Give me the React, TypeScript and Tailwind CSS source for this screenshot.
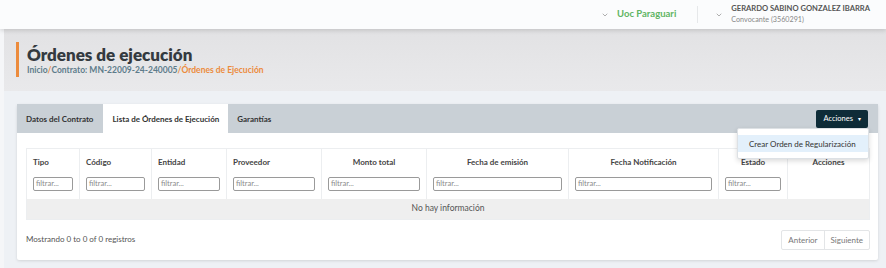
import { ChevronDown } from 'lucide-react'

const font = { fontFamily: 'Lato, "Noto Sans", sans-serif' }

interface Col {
  label: string
  width: string
  center?: boolean
  filter?: boolean
}

const cols: Col[] = [
  { label: 'Tipo', width: 'w-[53px]', filter: true },
  { label: 'Código', width: 'w-[72px]', filter: true },
  { label: 'Entidad', width: 'w-[75px]', filter: true },
  { label: 'Proveedor', width: 'w-[95px]', filter: true },
  { label: 'Monto total', width: 'w-[105px]', center: true, filter: true },
  { label: 'Fecha de emisión', width: 'w-[142px]', center: true, filter: true },
  { label: 'Fecha Notificación', width: 'w-[150px]', center: true, filter: true },
  { label: 'Estado', width: 'w-[69px]', center: true, filter: true },
  { label: 'Acciones', width: 'flex-1', center: true }
]

function TopBar() {
  return (
    <div className="h-[29px] bg-[#fbfcfd] shadow-[0_2px_4px_rgba(0,0,0,0.12)] relative z-10 flex items-center justify-end pr-[16px]">
      <div className="flex items-center gap-[8px]">
        <ChevronDown size={8} className="text-[#888]" />
        <span className="text-[9.5px] font-bold text-[#5fb563]">Uoc Paraguari</span>
      </div>
      <div className="w-px h-[17px] bg-[#e6e8ea] ml-[21px] mr-[17px]" />
      <div className="flex items-center gap-[8px]">
        <ChevronDown size={8} className="text-[#888]" />
        <div className="flex flex-col leading-[11px] pb-[1px]">
          <span className="text-[7.6px] font-bold text-[#555]">GERARDO SABINO GONZALEZ IBARRA</span>
          <span className="text-[7.2px] text-[#888]">Convocante (3560291)</span>
        </div>
      </div>
    </div>
  )
}

function Table() {
  return (
    <div className="border border-[#eceef0]">
      <div className="flex">
        {cols.map((c) => (
          <div
            key={c.label}
            className={`${c.width} h-[50px] border-r border-[#eceef0] last:border-r-0 px-[6px] pt-[7px] flex flex-col`}
          >
            <span className={`text-[8px] font-bold text-[#444] ${c.center ? 'text-center' : ''}`}>{c.label}</span>
            {c.filter && (
              <div className="mt-[9px] h-[14px] border border-[#9a9a9a] rounded-[2px] bg-white flex items-center px-[2px]">
                <span className="text-[7.5px] text-[#8a8a8a]">filtrar...</span>
              </div>
            )}
          </div>
        ))}
      </div>
      <div className="h-[20px] bg-[#efefef] flex items-center justify-center">
        <span className="text-[8.5px] text-[#555] pb-[1px]">No hay información</span>
      </div>
    </div>
  )
}

export default function App() {
  return (
    <div style={font} className="w-[886px] h-[268px] overflow-hidden bg-[#eef1f5] flex flex-col">
      <TopBar />
      <div className="flex flex-1">
        <div className="w-[4px] bg-[#f5f6f8]" />
        <div className="flex-1 flex flex-col">
          <div className="h-[62px] bg-gradient-to-b from-[#e2e2e4] to-[#e9e9eb] pl-[12px] pt-[13px]">
            <div className="border-l-[3px] border-[#ec8b3c] pl-[8px] h-[35px] flex flex-col justify-center">
              <h1 className="text-[17px] font-extrabold text-[#343a40] leading-[21px]">Órdenes de ejecución</h1>
              <div className="text-[8.5px] font-bold leading-[11px]">
                <span className="text-[#5e7c8b]">Inicio</span>
                <span className="text-[#ec8b3c]">/</span>
                <span className="text-[#5e7c8b]">Contrato: MN-22009-24-240005</span>
                <span className="text-[#ec8b3c]">/Órdenes de Ejecución</span>
              </div>
            </div>
          </div>
          <div className="pl-[13px] pr-[8px] pt-[13px]">
            <div className="bg-white rounded-[2px] shadow-[0_1px_3px_rgba(0,0,0,0.12)] h-[156px] relative">
              <div className="h-[29px] bg-[#c9d0d6] flex items-stretch pl-[9px] pr-[10px]">
                <div className="flex items-center pr-[10px] text-[8px] font-bold text-[#333]">Datos del Contrato</div>
                <div className="flex items-center bg-white px-[9px] text-[8px] font-bold text-[#333]">Lista de Órdenes de Ejecución</div>
                <div className="flex items-center px-[9px] text-[8px] font-bold text-[#333]">Garantías</div>
                <div className="flex-1" />
                <div className="flex items-center">
                  <button className="h-[18px] px-[7px] bg-[#0e2c38] rounded-[2px] text-white text-[7.5px] flex items-center gap-[5px]">
                    Acciones <span className="text-[6px]">▾</span>
                  </button>
                </div>
              </div>
              <div className="px-[9px] pt-[15px] pr-[8px]">
                <Table />
                <div className="flex items-center justify-between mt-[10px]">
                  <span className="text-[8px] text-[#555] pb-[2px]">Mostrando 0 to 0 of 0 registros</span>
                  <div className="flex border border-[#e3e5e7] rounded-[2px] h-[20px]">
                    <span className="px-[6px] flex items-center text-[8px] text-[#777] border-r border-[#e3e5e7]">Anterior</span>
                    <span className="px-[6px] flex items-center text-[8px] text-[#777]">Siguiente</span>
                  </div>
                </div>
              </div>
              <div className="absolute left-[720px] top-[24px] w-[132px] bg-white border border-[#dde1e5] rounded-[2px] shadow-[0_2px_5px_rgba(0,0,0,0.15)] py-[6px]">
                <div className="h-[17px] bg-[#e3f0fb] flex items-center pl-[11px] text-[8px] text-[#333] whitespace-nowrap">
                  Crear Orden de Regularización
                </div>
              </div>
            </div>
          </div>
        </div>
      </div>
    </div>
  )
}
